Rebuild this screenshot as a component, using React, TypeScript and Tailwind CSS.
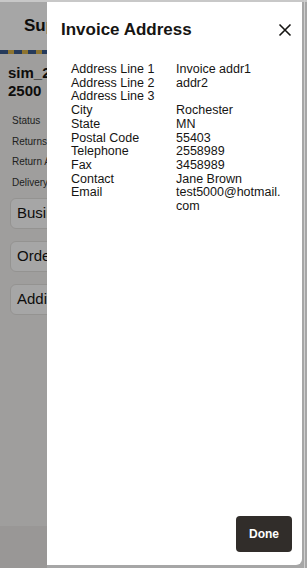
import React from "react";

const rows: [string, string][] = [
  ["Address Line 1", "Invoice addr1"],
  ["Address Line 2", "addr2"],
  ["Address Line 3", ""],
  ["City", "Rochester"],
  ["State", "MN"],
  ["Postal Code", "55403"],
  ["Telephone", "2558989"],
  ["Fax", "3458989"],
  ["Contact", "Jane Brown"],
  ["Email", "test5000@hotmail.\ncom"],
];

export default function App() {
  return (
    <div
      className="relative w-[307px] h-[568px] overflow-hidden bg-white"
      style={{ fontFamily: '"Liberation Sans", Arial, sans-serif' }}
    >
      {/* underlying page, only its left strip is visible */}
      <div className="w-[47px] h-full overflow-hidden">
        <div className="w-[307px] flex flex-col h-full bg-[#f4f3f1] border-t-2 border-[#d6d6d6]">
          <div className="bg-white h-[48px] flex items-center pl-[24px] shrink-0">
            <span className="text-[17px] font-bold text-[#161513]">Supplier</span>
          </div>
          <div className="h-[4px] shrink-0 bg-[repeating-linear-gradient(90deg,#3a5a8c_0px,#3a5a8c_8px,#d9b24a_8px,#d9b24a_14px)]" />
          <div className="px-[8px] pt-[10px] flex flex-col">
            <span className="text-[15px] font-bold text-[#161513] leading-[18px]">sim_2500</span>
            <span className="text-[15px] font-bold text-[#161513] leading-[18px]">2500</span>
            <div className="flex flex-col gap-[6.5px] mt-[14px] pl-[4px] text-[10px] text-[#333]">
              <span className="leading-[14px]">Status</span>
              <span className="leading-[14px]">Returns</span>
              <span className="leading-[14px]">Return Address</span>
              <span className="leading-[14px]">Delivery</span>
            </div>
            <div className="flex flex-col gap-[12px] mt-[8px] pl-[2px]">
              {["Business", "Order", "Additional"].map((t) => (
                <div
                  key={t}
                  className="h-[31px] rounded-[6px] border border-[#e4e2df] bg-white flex items-center pl-[6px] text-[15px] text-[#161513]"
                >
                  {t}
                </div>
              ))}
            </div>
          </div>
          <div className="mt-auto h-[42px] bg-[#ebe9e6] shrink-0" />
        </div>
      </div>
      {/* overlay */}
      <div className="absolute inset-0 bg-black/[0.35]" />
      {/* frame lines */}
      <div className="absolute left-0 right-0 top-0 h-[2px] bg-[#c8c8c8]" />
      <div className="absolute top-0 bottom-0 right-[2px] w-[1px] bg-[#cfcfcf]" />
      {/* dialog */}
      <div className="absolute left-[47px] top-[2px] right-[5px] bottom-[3px] bg-white flex flex-col rounded-br-[6px]">
        <div className="flex items-center justify-between pl-[14px] pr-[10px] pt-[17px]">
          <span className="text-[17px] font-bold text-[#161513] leading-[22px]">Invoice Address</span>
          <svg width="14" height="14" viewBox="0 0 14 14">
            <path d="M1.5 1.5L12.5 12.5M12.5 1.5L1.5 12.5" stroke="#161513" strokeWidth="1.6" />
          </svg>
        </div>
        <div className="mt-[22px] pl-[24px] pr-[8px] grid grid-cols-[105px_1fr] text-[12.5px] leading-[13.7px] text-[#161513]">
          {rows.map(([l, v]) => (
            <React.Fragment key={l}>
              <span>{l}</span>
              <span className="whitespace-pre-line">{v}</span>
            </React.Fragment>
          ))}
        </div>
        <div className="mt-auto flex justify-end pr-[10px] pb-[13px]">
          <button className="w-[56px] h-[36px] rounded-[4px] bg-[#312d2a] text-white text-[12px] font-bold">
            Done
          </button>
        </div>
      </div>
    </div>
  );
}
